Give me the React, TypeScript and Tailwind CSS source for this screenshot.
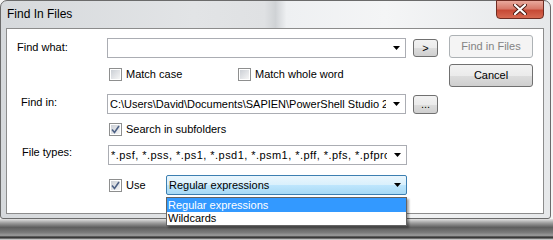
import React from "react";

function Arrow() {
  return (
    <svg width="7" height="4" viewBox="0 0 7 4" className="shrink-0">
      <path d="M0 0 H7 L3.5 4 Z" fill="#000" />
    </svg>
  );
}

function Combo({ text, width, track }: { text: string; width: string; track?: boolean }) {
  return (
    <div
      className={`${width} h-[20px] border border-[#abadb3] bg-white flex items-center pl-[2px] pr-[5px] shrink-0`}
    >
      <div
        className={`flex-1 overflow-hidden whitespace-nowrap text-[11px] leading-[13px] text-black ${track ? "tracking-[0.45px]" : ""}`}
      >
        {text}
      </div>
      <div className="w-[14px] flex justify-end">
        <Arrow />
      </div>
    </div>
  );
}

function Check({ checked, label }: { checked?: boolean; label: string }) {
  return (
    <div className="flex items-center gap-[4px]">
      <div className="w-[13px] h-[13px] border border-[#8e8f8f] bg-white p-[1px] shrink-0">
        <div className="w-full h-full bg-[linear-gradient(135deg,#cbcfd5,#f6f6f6)] flex items-center justify-center">
          {checked && (
            <svg width="9" height="9" viewBox="0 0 9 9">
              <path d="M1 4.5 L3.5 7.5 L8 1" stroke="#4d6185" strokeWidth="1.6" fill="none" />
            </svg>
          )}
        </div>
      </div>
      <span className="text-[11px] leading-[13px] text-black whitespace-nowrap">{label}</span>
    </div>
  );
}

function SmallButton({ label, h }: { label: string; h: string }) {
  return (
    <div
      className={`ml-[7px] w-[25px] ${h} rounded-[3px] border border-[#707070] bg-[linear-gradient(#f2f2f2_0%,#ebebeb_50%,#dddddd_50%,#cfcfcf_100%)] flex items-center justify-center text-[11px] leading-[11px] text-black shrink-0`}
    >
      {label}
    </div>
  );
}

export default function App() {
  return (
    <div className="w-[553px] h-[240px] relative overflow-hidden bg-[#f4f4f4] font-['Liberation_Sans',Arial,sans-serif]">
      <div className="w-[551px] h-[219px] rounded-t-[7px] rounded-b-[3px] border border-[#6b6b6b] bg-[linear-gradient(90deg,#d6d9dc_0%,#e2e4e6_35%,#dfe1e3_48%,#cfd2d5_50%,#eef0f2_52%,#f4f5f6_70%,#e6e8ea_100%)] flex flex-col">
        <div className="h-[27px] flex items-start justify-between pl-[6px]">
          <div className="mt-[6px] text-[12px] leading-[15px] text-black">Find In Files</div>
          <div className="mr-[6px] -mt-[1px] w-[48px] h-[19px] rounded-b-[4px] border border-[#6e2c22] bg-[linear-gradient(#e9a99c_0%,#d77a6a_45%,#c74a36_55%,#d66a52_100%)] flex items-center justify-center">
            <svg width="14" height="11" viewBox="0 0 14 11">
              <path d="M2 1 L12 10 M12 1 L2 10" stroke="#4a1a12" strokeWidth="4" strokeLinecap="round" />
              <path d="M2 1 L12 10 M12 1 L2 10" stroke="#ffffff" strokeWidth="2.2" strokeLinecap="round" />
            </svg>
          </div>
        </div>
        <div className="ml-[5px] w-[538px] h-[186px] border border-[#8c8c8c] bg-white flex">
          <div className="w-[431px] pl-[10px] flex flex-col">
            <div className="mt-[9px] flex items-center">
              <div className="w-[91px] text-[11px] leading-[13px] text-black -mt-[2px]">Find what:</div>
              <Combo text="" width="w-[299px]" />
              <SmallButton label=">" h="h-[18px]" />
            </div>
            <div className="mt-[10px] flex items-center pl-[92px]">
              <div className="w-[129px]">
                <Check label="Match case" />
              </div>
              <Check label="Match whole word" />
            </div>
            <div className="mt-[13px] flex items-center">
              <div className="w-[91px] pl-[4px] text-[11px] leading-[13px] text-black -mt-[3px]">Find in:</div>
              <Combo text="C:\Users\David\Documents\SAPIEN\PowerShell Studio 2012" width="w-[299px]" />
              <SmallButton label="..." h="h-[19px]" />
            </div>
            <div className="mt-[9px] flex items-center pl-[92px]">
              <Check checked label="Search in subfolders" />
            </div>
            <div className="mt-[9px] flex items-center">
              <div className="w-[91px] pl-[5px] text-[11px] leading-[13px] text-black -mt-[5px]">File types:</div>
              <Combo
                text="*.psf, *.pss, *.ps1, *.psd1, *.psm1, *.pff, *.pfs, *.pfproj, *.psproj"
                width="w-[299px]"
                track
              />
            </div>
            <div className="mt-[10px] flex items-center pl-[92px]">
              <div className="w-[57px]">
                <Check checked label="Use" />
              </div>
              <div className="w-[241px] h-[20px] rounded-[2px] border border-[#3c7fb1] bg-[linear-gradient(#eaf6fd_0%,#d9f0fc_50%,#bee6fd_50%,#a7d9f5_100%)] flex items-center pl-[2px] pr-[5px]">
                <div className="flex-1 text-[11px] leading-[13px] text-black whitespace-nowrap">Regular expressions</div>
                <Arrow />
              </div>
            </div>
          </div>
          <div className="pl-[11px] pt-[6px] flex flex-col gap-[6px]">
            <div className="w-[84px] h-[23px] rounded-[3px] border border-[#adb2b5] bg-[#f4f4f4] flex items-center justify-center text-[11px] leading-[13px] text-[#838383]">
              Find in Files
            </div>
            <div className="w-[84px] h-[23px] rounded-[3px] border border-[#707070] bg-[linear-gradient(#f2f2f2_0%,#ebebeb_50%,#dddddd_50%,#cfcfcf_100%)] flex items-center justify-center text-[11px] leading-[13px] text-black">
              Cancel
            </div>
          </div>
        </div>
      </div>
      <div className="h-[21px] bg-[linear-gradient(#e2e2e2_0%,#9a9a9a_20%,#5e5e5e_40%,#7c7c7c_65%,#9c9c9c_78%,#3a3a3a_86%,#3a3a3a_90%,#f2f2f2_100%)]" />
      <div className="absolute left-[166px] top-[197px] w-[241px] border border-[#646464] bg-white shadow-[2px_2px_2px_rgba(0,0,0,0.35)]">
        <div className="h-[14px] bg-[#3399ff] text-white text-[11px] leading-[14px] pl-[1px]">Regular expressions</div>
        <div className="h-[13px] text-black text-[11px] leading-[13px] pl-[1px]">Wildcards</div>
      </div>
    </div>
  );
}
